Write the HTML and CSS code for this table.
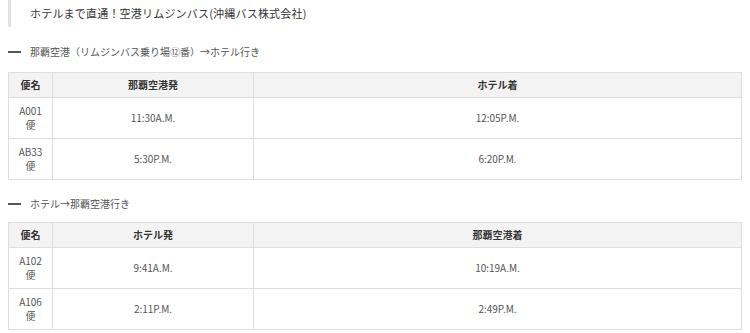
FILE: index.html
```html
<!DOCTYPE html>
<html lang="ja">
<head>
<meta charset="utf-8">
<link rel="stylesheet" href="styles.css">
</head>
<body>
<div class="title">ホテルまで直通！空港リムジンバス(沖縄バス株式会社)</div>

<h3 class="route"><span class="dash"></span>那覇空港（リムジンバス乗り場⑫番）→ホテル行き</h3>
<table class="timetable">
  <colgroup><col class="c1"><col class="c2"><col></colgroup>
  <thead>
    <tr><th>便名</th><th>那覇空港発</th><th>ホテル着</th></tr>
  </thead>
  <tbody>
    <tr><td>A001<br>便</td><td>11:30A.M.</td><td>12:05P.M.</td></tr>
    <tr><td>AB33<br>便</td><td>5:30P.M.</td><td>6:20P.M.</td></tr>
  </tbody>
</table>

<h3 class="route second"><span class="dash"></span>ホテル→那覇空港行き</h3>
<table class="timetable">
  <colgroup><col class="c1"><col class="c2"><col></colgroup>
  <thead>
    <tr><th>便名</th><th>ホテル発</th><th>那覇空港着</th></tr>
  </thead>
  <tbody>
    <tr><td>A102<br>便</td><td>9:41A.M.</td><td>10:19A.M.</td></tr>
    <tr><td>A106<br>便</td><td>2:11P.M.</td><td>2:49P.M.</td></tr>
  </tbody>
</table>
</body>
</html>
```

FILE: styles.css
```css
html, body {
  background: #fff;
}
body {
  margin: 0 8px 8px 8px;
  font-family: "Noto Sans CJK JP", "Noto Sans", sans-serif;
  color: #444;
}
.title {
  border-left: 3px solid #e2e2e2;
  padding: 6px 0 6px 19px;
  font-size: 11px;
  line-height: 15px;
  color: #333;
  letter-spacing: 0.2px;
}
.route {
  display: flex;
  align-items: center;
  margin: 18px 0 13px 0;
  font-size: 10px;
  line-height: 14px;
  font-weight: normal;
  color: #555;
}
.route.second {
  margin-top: 17px;
  margin-bottom: 11px;
}
.dash {
  display: block;
  width: 13px;
  height: 2px;
  background: #555;
  margin-right: 9px;
}
.timetable {
  width: 100%;
  border-collapse: collapse;
  table-layout: fixed;
  font-size: 10px;
  line-height: 14px;
}
.c1 { width: 44px; }
.c2 { width: 201px; }
.timetable th,
.timetable td {
  border: 1px solid #dedede;
  text-align: center;
  vertical-align: middle;
}
.timetable th {
  background: #f3f3f3;
  font-weight: bold;
  color: #333;
  padding: 5px 4px;
}
.timetable td {
  padding: 6px 4px;
  color: #555;
}
```
